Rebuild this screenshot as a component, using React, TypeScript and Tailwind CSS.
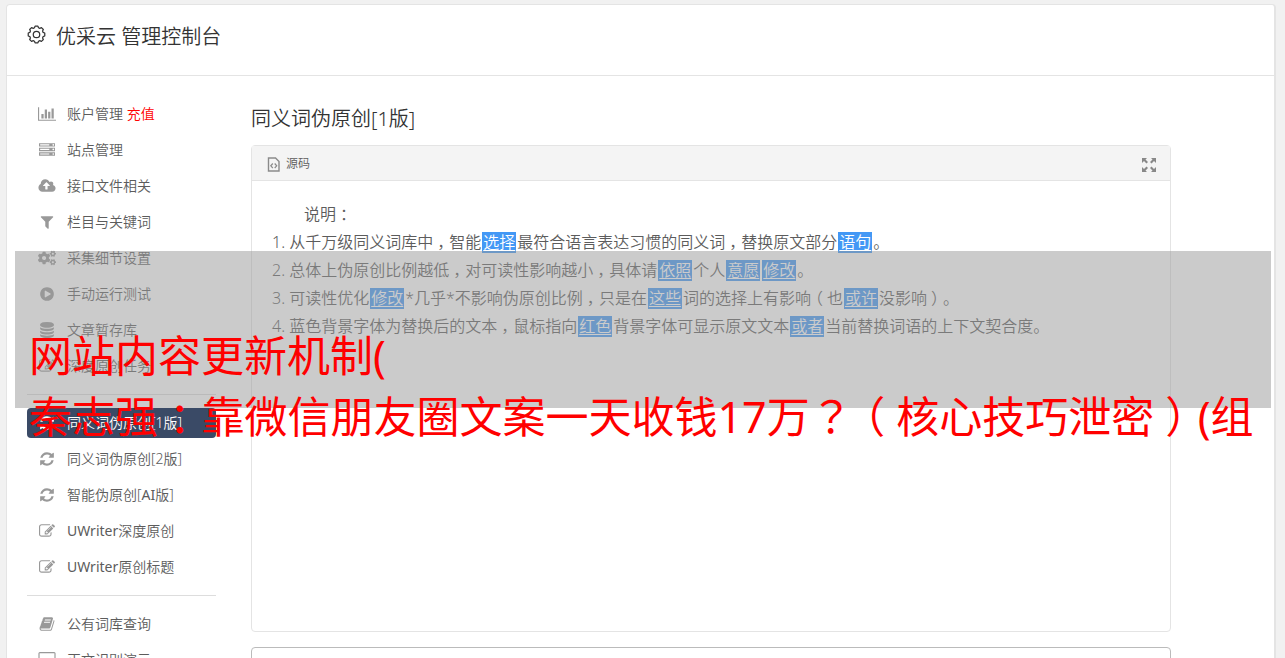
import { Fragment, type ReactNode } from "react";
import { FaCogs } from "react-icons/fa";

type Glyph = { viewBox: string; d: string };

const glyphs: Record<string, Glyph> = {
  chart: {
    viewBox: "0 0 2048 1792",
    d: "M640 896v512h-256v-512h256zm384-512v1024h-256v-1024h256zm1024 1152v128h-2048v-1536h128v1408h1920zm-640-896v768h-256v-768h256zm384-384v1152h-256v-1152h256z",
  },
  server: {
    viewBox: "0 0 1792 1792",
    d: "M128 1408h1024v-128h-1024v128zm0-512h1024v-128h-1024v128zm1568 448q0-40-28-68t-68-28-68 28-28 68 28 68 68 28 68-28 28-68zm-1568-960h1024v-128h-1024v128zm1568 448q0-40-28-68t-68-28-68 28-28 68 28 68 68 28 68-28 28-68zm0-512q0-40-28-68t-68-28-68 28-28 68 28 68 68 28 68-28 28-68zm96 832v384h-1792v-384h1792zm0-512v384h-1792v-384h1792zm0-512v384h-1792v-384h1792z",
  },
  cloud: {
    viewBox: "0 0 1920 1792",
    d: "M1280 864q0-14-9-23l-352-352q-9-9-23-9t-23 9l-351 351q-10 12-10 24 0 14 9 23t23 9h224v352q0 13 9.5 22.5t22.5 9.5h192q13 0 22.5-9.5t9.5-22.5v-352h224q13 0 22.5-9.5t9.5-22.5zm640 288q0 159-112.5 271.5t-271.5 112.5h-1088q-185 0-316.5-131.5t-131.5-316.5q0-130 70-240t188-165q-2-30-2-43 0-212 150-362t362-150q156 0 285.5 87t188.5 231q71-62 166-62 106 0 181 75t75 181q0 76-41 138 130 31 213.5 135.5t83.5 238.5z",
  },
  filter: {
    viewBox: "0 0 1792 1792",
    d: "M1595 295q17 41-14 70l-493 493v742q0 42-39 59-13 5-25 5-27 0-45-19l-256-256q-19-19-19-45v-486l-493-493q-31-29-14-70 17-39 59-39h1280q42 0 59 39z",
  },
  play: {
    viewBox: "0 0 1792 1792",
    d: "M896 128q209 0 385.5 103t279.5 279.5 103 385.5-103 385.5-279.5 279.5-385.5 103-385.5-103-279.5-279.5-103-385.5 103-385.5 279.5-279.5 385.5-103zm384 823q32-18 32-55t-32-55l-544-320q-31-19-64-1-32 19-32 56v640q0 37 32 56 16 8 32 8 17 0 32-9z",
  },
  database: {
    viewBox: "0 0 1792 1792",
    d: "M896 768q237 0 443-43t325-127v170q0 69-103 128t-280 93.5-385 34.5-385-34.5-280-93.5-103-128v-170q119 84 325 127t443 43zm0 768q237 0 443-43t325-127v170q0 69-103 128t-280 93.5-385 34.5-385-34.5-280-93.5-103-128v-170q119 84 325 127t443 43zm0-384q237 0 443-43t325-127v170q0 69-103 128t-280 93.5-385 34.5-385-34.5-280-93.5-103-128v-170q119 84 325 127t443 43zm0-1152q208 0 385 34.5t280 93.5 103 128v128q0 69-103 128t-280 93.5-385 34.5-385-34.5-280-93.5-103-128v-128q0-69 103-128t280-93.5 385-34.5z",
  },
  edit: {
    viewBox: "0 0 1792 1792",
    d: "M888 1184l116-116-152-152-116 116v56h96v96h56zm440-720q-16-16-33 1l-350 350q-17 17-1 33t33-1l350-350q17-17 1-33zm80 594v190q0 119-84.5 203.5t-203.5 84.5h-832q-119 0-203.5-84.5t-84.5-203.5v-832q0-119 84.5-203.5t203.5-84.5h832q63 0 117 25 15 7 18 23 3 17-9 29l-49 49q-14 14-32 8-23-6-45-6h-832q-66 0-113 47t-47 113v832q0 66 47 113t113 47h832q66 0 113-47t47-113v-126q0-13 9-22l64-64q15-15 35-7t20 29zm-96-738l288 288-672 672h-288v-288zm444 132l-92 92-288-288 92-92q28-28 68-28t68 28l152 152q28 28 28 68t-28 68z",
  },
  refresh: {
    viewBox: "0 0 1792 1792",
    d: "M1639 1056q0 5-1 7-64 268-268 434.5t-478 166.5q-146 0-282.5-55t-243.5-157l-129 129q-19 19-45 19t-45-19-19-45v-448q0-26 19-45t45-19h448q26 0 45 19t19 45-19 45l-137 137q71 66 161 102t187 36q134 0 250-65t186-179q11-17 53-117 8-23 30-23h192q13 0 22.5 9.5t9.5 22.5zm25-800v448q0 26-19 45t-45 19h-448q-26 0-45-19t-19-45 19-45l138-138q-148-137-349-137-134 0-250 65t-186 179q-11 17-53 117-8 23-30 23h-199q-13 0-22.5-9.5t-9.5-22.5v-7q65-268 270-434.5t480-166.5q146 0 284 55.5t245 156.5l130-129q19-19 45-19t45 19 19 45z",
  },
  book: {
    viewBox: "0 0 1792 1792",
    d: "M1703 478q40 57 18 129l-275 906q-19 64-76.5 107.5t-122.5 43.5h-923q-77 0-148.5-53.5t-99.5-131.5q-24-67-2-127 0-4 3-27t4-37q1-8-3-21.5t-3-19.5q2-11 8-21t16.5-23.5 16.5-23.5q23-38 45-91.5t30-91.5q3-10 .5-30t-.5-28q3-11 17-28t17-23q21-36 42-92t25-90q1-9-2.5-32t.5-28q4-13 22-30.5t22-22.5q19-26 42.5-84.5t27.5-96.5q1-8-3-25.5t-2-26.5q2-8 9-18t18-23 17-21q8-12 16.5-30.5t15-35 16-36 19.5-32 26.5-23.5 36-11.5 47.5 5.5l-1 3q38-9 51-9h761q74 0 114 56t18 130l-274 906q-36 119-71.5 153.5t-128.5 34.5h-869q-27 0-38 15-11 16-1 43 24 70 144 70h923q29 0 56-15.5t35-41.5l300-987q7-22 5-57 38 15 59 43zm-1064 2q-4 13 2 22.5t20 9.5h608q13 0 25.5-9.5t16.5-22.5l21-64q4-13-2-22.5t-20-9.5h-608q-13 0-25.5 9.5t-16.5 22.5zm-83 256q-4 13 2 22.5t20 9.5h608q13 0 25.5-9.5t16.5-22.5l21-64q4-13-2-22.5t-20-9.5h-608q-13 0-25.5 9.5t-16.5 22.5z",
  },
  desktop: {
    viewBox: "0 0 1920 1792",
    d: "M1792 992v-832q0-13-9.5-22.5t-22.5-9.5h-1600q-13 0-22.5 9.5t-9.5 22.5v832q0 13 9.5 22.5t22.5 9.5h1600q13 0 22.5-9.5t9.5-22.5zm128-832v1088q0 66-47 113t-113 47h-544q0 37 16 77.5t32 71 16 43.5q0 26-19 45t-45 19h-512q-26 0-45-19t-19-45q0-14 16-44t32-70 16-78h-544q-66 0-113-47t-47-113v-1088q0-66 47-113t113-47h1600q66 0 113 47t47 113z",
  },
};

function Icon({ name }: { name: string }) {
  if (name === "cogs") return <FaCogs className="h-4 w-[18px]" />;
  const glyph = glyphs[name];
  return (
    <svg viewBox={glyph.viewBox} className="h-4 w-[18px]" fill="currentColor" fillRule="evenodd" aria-hidden="true">
      <path d={glyph.d} />
    </svg>
  );
}

type Item = { icon: string; label: string; extra?: string; active?: boolean };

const groups: Item[][] = [
  [
    { icon: "chart", label: "账户管理", extra: "充值" },
    { icon: "server", label: "站点管理" },
    { icon: "cloud", label: "接口文件相关" },
    { icon: "filter", label: "栏目与关键词" },
    { icon: "cogs", label: "采集细节设置" },
    { icon: "play", label: "手动运行测试" },
    { icon: "database", label: "文章暂存库" },
    { icon: "edit", label: "深度原创任务" },
  ],
  [
    { icon: "refresh", label: "同义词伪原创[1版]", active: true },
    { icon: "refresh", label: "同义词伪原创[2版]" },
    { icon: "refresh", label: "智能伪原创[AI版]" },
    { icon: "edit", label: "UWriter深度原创" },
    { icon: "edit", label: "UWriter原创标题" },
  ],
  [
    { icon: "book", label: "公有词库查询" },
    { icon: "desktop", label: "正文识别演示" },
  ],
];

function NavLink({ item }: { item: Item }) {
  return (
    <a
      href="#"
      className={
        item.active
          ? "flex h-[30px] items-center gap-[11px] rounded bg-[#3a4a66] px-[11px] text-white"
          : "flex h-[30px] items-center gap-[11px] rounded px-[11px] text-[#5c5c5c]"
      }
    >
      <span className={item.active ? "text-white" : "text-[#999]"}>
        <Icon name={item.icon} />
      </span>
      <span>
        {item.label.split(/([A-Za-z]+)/).map((part, index) =>
          index % 2 ? (
            <span key={index} className="font-normal">
              {part}
            </span>
          ) : (
            part
          ),
        )}
        {item.extra && <span className="text-[#f00]"> {item.extra}</span>}
      </span>
    </a>
  );
}

function Mark({ children }: { children: ReactNode }) {
  return (
    <u className="mx-px inline-block h-[21px] border border-[#4398f5] bg-[#4398f5] align-baseline leading-[19px] text-white underline-offset-2">
      {children}
    </u>
  );
}

// Sets full-width punctuation in the middle of its cell.
function Text({ children, large = false }: { children: string; large?: boolean }) {
  return (
    <>
      {children.split(/([，：（）])/).map((part, index) =>
        index % 2 ? (
          <span
            key={index}
            className={large ? "px-[11px] [font-feature-settings:'halt']" : "px-1 [font-feature-settings:'halt']"}
          >
            {part}
          </span>
        ) : (
          <Fragment key={index}>{part}</Fragment>
        ),
      )}
    </>
  );
}

export default function App() {
  return (
    <div className="relative h-screen overflow-hidden bg-[#f1f1f1] pt-1 pr-[9px] pl-1.5 font-['Noto_Sans','Noto_Sans_CJK_SC',sans-serif] font-[350]">
      <div className="min-h-full rounded-t border border-r-2 border-[#e4e4e4] bg-white">
        <header className="flex h-[71px] items-start gap-2.5 border-b border-[#e4e4e4] pt-4 pl-5 text-[#333]">
          <svg viewBox="0 0 20 20" className="mt-1 size-[19px]" fill="none" stroke="currentColor" strokeWidth="1.3" aria-hidden="true">
            <circle cx="10" cy="10" r="3.4" />
            <path
              strokeLinejoin="round"
              d="M8.5 1.2h3l.6 1.7 1.4.6 1.7-.8 2 2-.8 1.7.6 1.4 1.700.6v3.200l-1.700.6-.6 1.400.8 1.700-2 2-1.700-.8-1.400.6-.6 1.700h-3l-.6-1.700-1.400-.6-1.700.8-2-2 .8-1.700-.6-1.400-1.700-.6V8.400l1.700-.6.6-1.400-.8-1.700 2-2 1.700.8 1.400-.6z"
            />
          </svg>
          <h1 className="text-xl leading-8">优采云 管理控制台</h1>
        </header>
        <div className="flex pt-[23px] pr-[103px] pl-5">
          <nav className="w-[189px] shrink-0 text-sm">
            {groups.map((group, index) => (
              <div key={index} className={index > 0 ? "mt-[13px] border-t border-[#ddd] pt-[13px]" : ""}>
                <ul className="flex flex-col gap-1.5">
                  {group.map((item) => (
                    <li key={item.label}>
                      <NavLink item={item} />
                    </li>
                  ))}
                </ul>
              </div>
            ))}
          </nav>
          <main className="ml-[35px] min-w-0 flex-1">
            <h2 className="pt-1 text-xl leading-8 text-[#333]">同义词伪原创[1版]</h2>
            <section className="mt-2.5 rounded border border-[#e4e4e4] text-[#5c5c5c]">
              <div className="flex h-[35px] items-center justify-between border-b border-[#e4e4e4] bg-[#f4f4f4] pr-3.5 pl-[15px]">
                <button type="button" className="flex items-center gap-1.5 pt-0.5 text-xs">
                  <svg viewBox="0 0 13 15" className="h-[15px] w-[13px]" fill="none" stroke="#8a8a8a" strokeWidth="1.4" aria-hidden="true">
                    <path d="M1.500 1h7L12 4.500V14H1.500z" />
                    <path d="M5.800 6.500L3.800 8.800l2 2.200M7.700 6.500l2 2.300-2 2.200" strokeWidth="1.2" />
                  </svg>
                  源码
                </button>
                <button type="button" aria-label="最大化" className="mt-1 text-[#888]">
                  <svg viewBox="0 0 14 14" className="size-3.5" fill="currentColor">
                    <path d="M0 0h5L3.500 1.500l2.500 2.500-1.500 1.500L2 3 0 5zM14 0v5l-2-2-2.500 2.500L8 4l2.500-2.500L9 0zM0 14V9l2 2 2.500-2.500L6 10l-2.500 2.500L5 14zM14 14H9l1.500-1.500L8 10l1.500-1.500L12 11l2-2z" />
                  </svg>
                </button>
              </div>
              <div className="min-h-[450px] px-5 pt-[19px] leading-7">
                <p className="pl-8">
                  <Text>说明：</Text>
                </p>
                <ol className="list-none">
                  <li>
                    <Text>1. 从千万级同义词库中，智能</Text>
                    <Mark>选择</Mark>
                    <Text>最符合语言表达习惯的同义词，替换原文部分</Text>
                    <Mark>语句</Mark>。
                  </li>
                  <li>
                    <Text>2. 总体上伪原创比例越低，对可读性影响越小，具体请</Text>
                    <Mark>依照</Mark>个人<Mark>意愿</Mark>
                    <Mark>修改</Mark>。
                  </li>
                  <li>
                    3. 可读性优化<Mark>修改</Mark>
                    <Text>*几乎*不影响伪原创比例，只是在</Text>
                    <Mark>这些</Mark>
                    <Text>词的选择上有影响（也</Text>
                    <Mark>或许</Mark>
                    <Text>没影响）。</Text>
                  </li>
                  <li>
                    <Text>4. 蓝色背景字体为替换后的文本，鼠标指向</Text>
                    <Mark>红色</Mark>背景字体可显示原文文本<Mark>或者</Mark>当前替换词语的上下文契合度。
                  </li>
                </ol>
              </div>
            </section>
            <section className="mt-[15px] h-24 rounded border border-[#bbb]" />
          </main>
        </div>
      </div>
      <div className="absolute top-[251px] right-3.5 left-[15px] h-[157px] bg-[rgba(151,151,151,0.5)] pt-[76px] pl-3.5 text-[43px] leading-[58px] font-normal whitespace-nowrap text-[#f00]">
        <p>网站内容更新机制(</p>
        <p>
          <Text large>秦志强：靠微信朋友圈文案一天收钱17万</Text>
          <span className="font-['Noto_Sans_CJK_TC',sans-serif]">？</span>
          <Text large>（核心技巧泄密）(组</Text>
        </p>
      </div>
    </div>
  );
}
